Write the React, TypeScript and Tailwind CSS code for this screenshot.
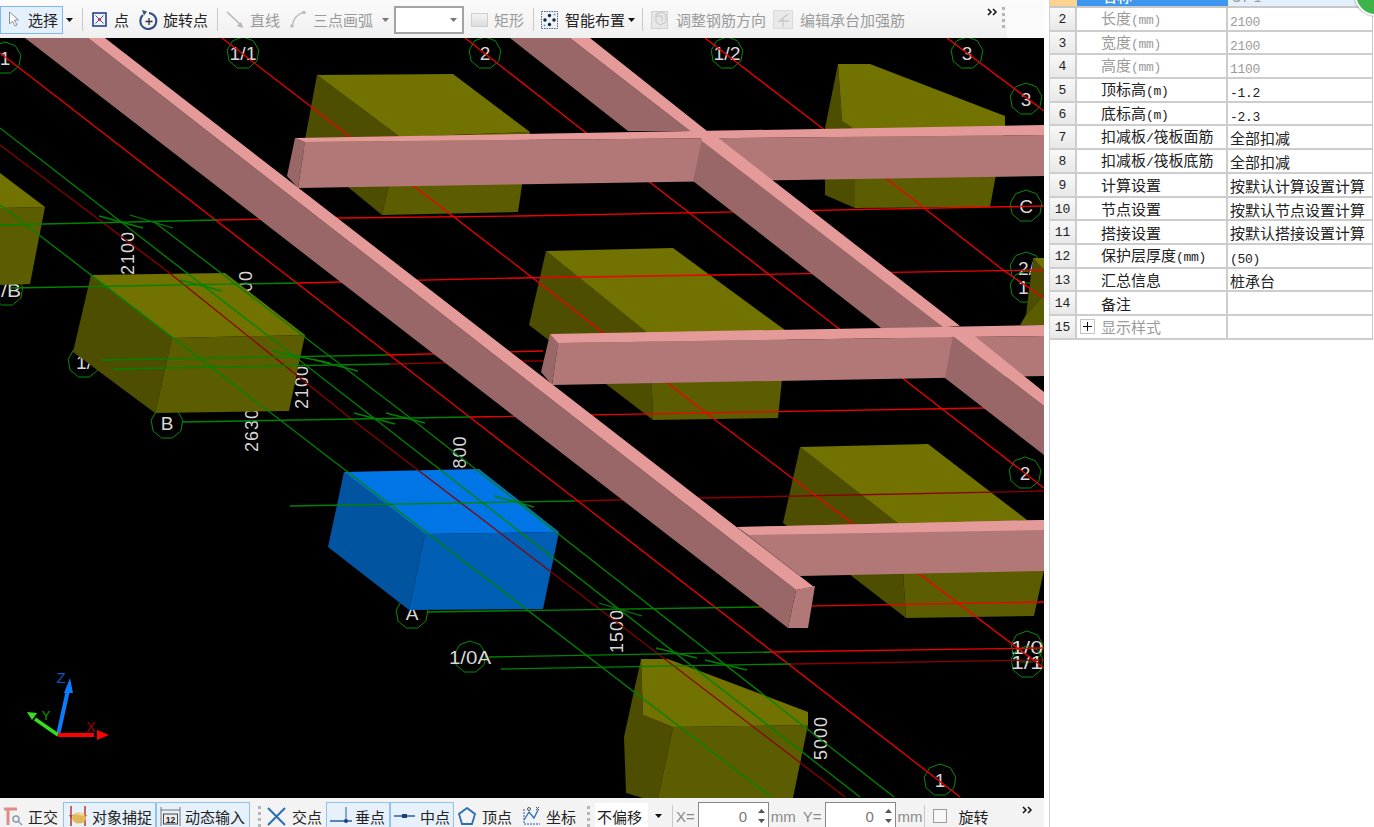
import type { ReactNode } from 'react';

const CJK = '"Noto Sans CJK SC", "Noto Sans", sans-serif';

// half-width latin next to 15px CJK, the way the old Windows grid renders it
function Mixed({ text }: { text: string }) {
  const parts = text.split(/([\x20-\x7e]+)/).filter(Boolean);
  return (
    <>
      {parts.map((p, i) =>
        /^[\x20-\x7e]+$/.test(p) ? (
          <span key={i} className="font-['Liberation_Mono',monospace] text-[13px] tracking-[-0.3px]">
            {p}
          </span>
        ) : (
          <span key={i}>{p}</span>
        )
      )}
    </>
  );
}

function Sep({ className = '' }: { className?: string }) {
  return <div className={`w-px h-[23px] bg-[#c9c9c9] shrink-0 ${className}`} />;
}

function Caret({ className = '', gray = false }: { className?: string; gray?: boolean }) {
  return (
    <svg width="7" height="4" viewBox="0 0 7 4" className={`shrink-0 ${className}`}>
      <path d="M0 0h7L3.5 4z" fill={gray ? '#777' : '#111'} />
    </svg>
  );
}

function Label({ children, className = '', off = false }: { children: ReactNode; className?: string; off?: boolean }) {
  return (
    <span className={`shrink-0 whitespace-nowrap text-[15px] leading-none ${off ? 'text-[#9b9b9b]' : 'text-[#222]'} ${className}`}>
      {children}
    </span>
  );
}

function Grip({ className = '' }: { className?: string }) {
  return (
    <div className={`flex flex-col gap-[3px] shrink-0 ${className}`}>
      {[0, 1, 2, 3].map((i) => (
        <div key={i} className="w-[3px] h-[3px] bg-[#b5b5b5]" />
      ))}
    </div>
  );
}

function Chevrons({ className = '' }: { className?: string }) {
  return (
    <svg width="11" height="8" viewBox="0 0 11 8" className={`shrink-0 ${className}`}>
      <path d="M1 1l3 3-3 3M6 1l3 3-3 3" fill="none" stroke="#111" strokeWidth="1.5" />
    </svg>
  );
}

function TopToolbar() {
  return (
    <div className="h-[38px] shrink-0 flex items-center bg-gradient-to-b from-[#fbfbfb] to-[#f0f0f0] overflow-hidden pt-[1px]">
      <div className="w-[63px] h-[28px] shrink-0 flex items-center bg-[#e4f0fb] border border-[#7db8f2]">
        <svg width="12" height="17" viewBox="0 0 12 17" className="ml-[7px]">
          <path d="M1.5 1v12l3-3 2.5 5 2-1-2.5-5h4z" fill="#fff" stroke="#8a8f98" />
        </svg>
        <Label className="ml-[8px]">选择</Label>
      </div>
      <Caret className="ml-[3px]" />
      <Sep className="ml-[9px]" />
      <svg width="15" height="15" viewBox="0 0 15 15" className="ml-[9px] shrink-0">
        <rect x="1" y="1" width="13" height="13" fill="#eef2fb" stroke="#26408f" strokeWidth="1.6" />
        <path d="M3.5 3.5l8 8M11.5 3.5l-8 8" stroke="#3a55a8" />
        <circle cx="7.5" cy="7.5" r="1.6" fill="#d8343a" />
      </svg>
      <Label className="ml-[7px]">点</Label>
      <svg width="20" height="22" viewBox="0 0 20 22" className="ml-[10px] shrink-0">
        <path d="M4 6a8 8 0 1 0 6-2" fill="none" stroke="#2d4f86" strokeWidth="2" />
        <path d="M3 1l5 1.500-3 4z" fill="#2d4f86" />
        <path d="M10 9v7M6.500 12.500h7" stroke="#333" strokeWidth="1.300" />
      </svg>
      <Label className="ml-[4px]">旋转点</Label>
      <Sep className="ml-[9px]" />
      <svg width="19" height="19" viewBox="0 0 19 19" className="ml-[8px] shrink-0">
        <path d="M1 2l15 14" stroke="#b5b5b5" strokeWidth="1.500" />
        <path d="M11 16l6 2-2-6z" fill="#b5b5b5" />
      </svg>
      <Label off className="ml-[5px]">直线</Label>
      <svg width="16" height="19" viewBox="0 0 16 19" className="ml-[10px] shrink-0">
        <path d="M2 17C3 9 7 4 14 2" fill="none" stroke="#bdbdbd" strokeWidth="1.500" />
        <circle cx="2" cy="16" r="1.800" fill="#bdbdbd" />
        <circle cx="14" cy="2.500" r="1.800" fill="#bdbdbd" />
      </svg>
      <Label off className="ml-[7px]">三点画弧</Label>
      <Caret gray className="ml-[9px]" />
      <div className="ml-[5px] w-[70px] h-[28px] shrink-0 flex items-center justify-end pr-[5px] bg-white border-2 border-[#a3a3a3]">
        <Caret gray />
      </div>
      <div className="ml-[7px] w-[17px] h-[14px] shrink-0 bg-gradient-to-b from-[#f4f4f4] to-[#dcdcdc] border border-[#cfcfcf]" />
      <Label off className="ml-[6px]">矩形</Label>
      <Sep className="ml-[9px]" />
      <svg width="17" height="18" viewBox="0 0 17 18" className="ml-[7px] shrink-0">
        <rect x="0.500" y="0.500" width="16" height="17" fill="#eef3f7" stroke="#51606e" strokeDasharray="1.500 1" />
        <circle cx="8.500" cy="4.500" r="1.700" fill="#14253f" />
        <circle cx="4" cy="9" r="1.700" fill="#14253f" />
        <circle cx="13" cy="9" r="1.700" fill="#14253f" />
        <circle cx="8.500" cy="13.500" r="1.700" fill="#14253f" />
        <circle cx="3.500" cy="14.500" r="1" fill="#6b93c9" />
        <circle cx="13.500" cy="3.500" r="1" fill="#6b93c9" />
      </svg>
      <Label className="ml-[7px]">智能布置</Label>
      <Caret className="ml-[3px]" />
      <Sep className="ml-[7px]" />
      <svg width="17" height="19" viewBox="0 0 17 19" className="ml-[8px] shrink-0">
        <rect x="0.500" y="1.500" width="16" height="17" fill="#e7e7e7" stroke="#d2d2d2" />
        <path d="M5 4l6-2 4 3v7l-6 3-4-3z" fill="none" stroke="#c2c2c2" />
        <path d="M5 6h6v5" fill="none" stroke="#c2c2c2" />
      </svg>
      <Label off className="ml-[8px]">调整钢筋方向</Label>
      <svg width="20" height="19" viewBox="0 0 20 19" className="ml-[7px] shrink-0">
        <rect x="0.500" y="0.500" width="19" height="18" fill="#e9e9e9" stroke="#dadada" />
        <path d="M15 4L6 11h10M10 7v10" fill="none" stroke="#c8c8c8" strokeWidth="1.300" />
      </svg>
      <Label off className="ml-[7px]">编辑承台加强筋</Label>
      <Chevrons className="ml-[82px] -mt-[15px]" />
      <Grip className="ml-[4px] -mt-[4px]" />
      <div className="ml-[2px] flex-1 h-full bg-[#fafafa] mt-[6px]" />
    </div>
  );
}

const BUBBLES: { x: number; y: number; t: string; rx?: number; ry?: number; tw?: number; tx?: number }[] = [
  { x: 5, y: 58, t: '1' },
  { x: 243, y: 53, t: '1/1', tw: 27 },
  { x: 485, y: 53, t: '2' },
  { x: 727, y: 53, t: '1/2', tw: 27 },
  { x: 967, y: 53, t: '3' },
  { x: 1026, y: 99, t: '3' },
  { x: 1026, y: 206, t: 'C' },
  { x: 1026, y: 268, t: '2/', tw: 16 },
  { x: 1026, y: 287, t: '1/', tw: 16 },
  { x: 7, y: 290, t: '/B', tw: 20, tx: 11 },
  { x: 84, y: 362, t: '1/', tw: 16 },
  { x: 167, y: 423, t: 'B' },
  { x: 412, y: 613, t: 'A', rx: 16, ry: 16 },
  { x: 470, y: 657, t: '1/0A', tw: 42 },
  { x: 940, y: 780, t: '1' },
  { x: 1025, y: 473, t: '2' },
  { x: 1027, y: 647, t: '1/0', tw: 32 },
  { x: 1027, y: 662, t: '1/1', tw: 32 },
];

const DIMS = [
  { x: 128, y: 253, t: '2100' },
  { x: 246, y: 281, t: '00' },
  { x: 252, y: 430, t: '2630' },
  { x: 302, y: 387, t: '2100' },
  { x: 460, y: 452, t: '800' },
  { x: 617, y: 631, t: '1500' },
  { x: 821, y: 738, t: '5000' },
];

// top, left, right faces
const BOXES: [string, string, string][] = [
  ['317,75 453,74 530,132 400,137', '317,75 400,137 382,215 303,150', '400,137 530,132 518,212 382,215'],
  ['546,251 673,248 785,330 650,335', '546,251 650,335 653,420 529,325', '650,335 787,330 778,418 653,420'],
  ['838,64 870,64 1005,116 1005,128 855,130 842,121', '838,64 842,121 855,130 855,208 825,195 825,128', '855,130 1005,126 990,207 855,208'],
  ['91,275 225,273 305,335 172,338', '91,275 172,338 155,413 73,352', '172,338 305,335 289,411 155,413'],
  ['0,173 45,207 0,208', '0,0 0,0 0,0', '0,208 45,207 30,284 0,285'],
  ['800,447 928,444 1044,533 900,525', '800,447 900,525 906,618 783,523', '900,525 1044,520 1044,570 1034,616 906,618'],
  ['641,659 668,659 808,712 808,725 673,727 643,715', '641,659 643,715 673,727 658,798 643,798 626,793 624,737', '673,727 808,725 793,798 658,798'],
  ['1033,258 1044,258 1044,270', '1033,258 1044,270 1044,295 1026,315', '1026,315 1044,295 1044,325 1020,325'],
];

const RED = [
  '0,53 467,415 960,797',
  '222,38 520,268 710,416 1044,668',
  '465,38 585,132 838,328 1044,488',
  '705,38 822,128 1003,270 1044,298',
  '947,38 1044,111',
  '340,218 520,216 1044,206',
  '217,220 340,218',
  '297,283 520,278 1044,270',
  '387,355 543,351',
  '470,417 983,408 1044,407',
  '759,607 1044,602',
  '771,652 1044,648',
];
const DARK_RED = ['0,145 167,271 350,418 845,797', '390,364 527,361 545,361', '575,501 702,498 1044,491', '791,664 1044,660'];
const GREEN = [
  '0,128 370,415 860,797',
  '153,221 413,420 894,797',
  '0,205 771,797',
  '0,225 217,220',
  '10,288 297,283',
  '102,360 387,355',
  '113,369 390,364',
  '183,422 470,417',
  '290,506 575,501',
  '427,612 759,607',
  '489,657 771,652',
  '501,669 791,664',
  '99,216 143,228',
  '130,215 173,228',
  '180,280 222,291',
  '272,351 330,363',
  '315,360 358,371',
  '354,413 395,424',
  '386,413 425,423',
  '494,496 534,507',
  '599,603 642,616',
  '656,648 697,658',
  '705,660 747,670',
];

function ring(x: number, y: number, rx: number, ry: number) {
  const pts: string[] = [];
  for (let i = 0; i < 9; i++) {
    const a = (i / 9) * Math.PI * 2 - Math.PI / 2;
    pts.push(`${(x + rx * Math.cos(a)).toFixed(1)},${(y + ry * Math.sin(a)).toFixed(1)}`);
  }
  return pts.join(' ');
}

function Scene() {
  const pink = '#e59a9a';
  const side = '#996767';
  const front = '#b27777';
  return (
    <svg viewBox="0 38 1044 760" width="1044" height="760" className="block bg-black shrink-0">
      <g fontFamily="Liberation Sans, sans-serif" fill="#d8d8d8">
        {DIMS.map((d) => (
          <text key={d.t + d.x} x={d.x} y={d.y} fontSize="18" textAnchor="middle" dominantBaseline="central" letterSpacing="1" transform={`rotate(-90 ${d.x} ${d.y})`}>
            {d.t}
          </text>
        ))}
        {BUBBLES.map((b) => (
          <g key={b.t + b.x + b.y}>
            <polygon points={ring(b.x, b.y, b.rx ?? 16, b.ry ?? 16)} fill="none" stroke="#0b8a0b" />
            <text
              x={b.tx ?? b.x}
              y={b.y + 7}
              fontSize="19"
              textAnchor="middle"
              {...(b.tw ? { textLength: b.tw, lengthAdjust: 'spacingAndGlyphs' as const } : {})}
            >
              {b.t}
            </text>
          </g>
        ))}
      </g>

      {BOXES.map((b, i) => (
        <g key={i}>
          <polygon points={b[1]} fill="#4e4e00" />
          <polygon points={b[2]} fill="#5c5c00" />
          <polygon points={b[0]} fill="#727200" />
        </g>
      ))}
      <polygon points="344,472 425,534 409,610 328,547" fill="#0054a0" />
      <polygon points="425,534 559,532 543,609 409,610" fill="#005eb4" />
      <polygon points="344,472 479,469 559,532 425,534" fill="#0076e6" />

      <g fill="none" strokeWidth="1.300">
        {DARK_RED.map((p) => (
          <polyline key={p} points={p} stroke="#8c0000" />
        ))}
        {RED.map((p) => (
          <polyline key={p} points={p} stroke="#f00000" />
        ))}
        {GREEN.map((p) => (
          <polyline key={p} points={p} stroke="#008400" />
        ))}
      </g>

      {/* second diagonal beam, part behind the first cross beam */}
      <polygon points="510,38 570,38 690,131 628,131" fill={side} />
      <polygon points="570,38 590,38 707,131 690,131" fill={pink} />

      {/* cross beam A */}
      <polygon points="295,138 305,142 298,188 287,176" fill={side} />
      <polygon points="305,142 1044,135 1044,176 298,188" fill={front} />
      <polygon points="295,138 1044,125 1044,135 305,142" fill={pink} />

      {/* second diagonal beam, middle part */}
      <polygon points="702,140 952,328 945,378 693,181" fill={side} />
      <polygon points="700,133 712,133 960,326 943,327 702,141" fill={pink} />

      {/* cross beam B */}
      <polygon points="550,334 558,343 552,385 541,372" fill={side} />
      <polygon points="558,343 1044,336 1044,376 552,385" fill={front} />
      <polygon points="550,334 1044,325 1044,336 558,343" fill={pink} />

      {/* second diagonal beam, last part */}
      <polygon points="953,336 1044,406 1044,455 945,378" fill={side} />
      <polygon points="955,328 972,334 1044,392 1044,406 953,336" fill={pink} />

      {/* cross beam C */}
      <polygon points="737,527 1044,520 1044,571 800,576" fill={front} />
      <polygon points="737,527 1044,520 1044,530 749,535" fill={pink} />

      {/* main diagonal beam */}
      <polygon points="25,38 88,38 796,590 788,628" fill={side} />
      <polygon points="88,38 105,38 814,587 796,590" fill={pink} />
      <polygon points="796,590 815,586 808,628 788,628" fill={front} />

      {/* axis gizmo */}
      <path d="M58 735L68 690" stroke="#0a7cff" strokeWidth="4" />
      <path d="M70 678l3 15h-9z" fill="#0a7cff" />
      <path d="M58 735L35 719" stroke="#35e01a" strokeWidth="3.500" />
      <path d="M27 712l10 1-5 7z" fill="#35e01a" />
      <path d="M58 735h36" stroke="#ff0000" strokeWidth="4" />
      <path d="M109 735l-12-5v10z" fill="#ff0000" />
      <text x="61" y="683" fontSize="15" textAnchor="middle" fill="#0a5cc0" fontFamily="Liberation Sans, sans-serif">Z</text>
      <text x="46" y="720" fontSize="13" textAnchor="middle" fill="#0a9a0a" fontFamily="Liberation Sans, sans-serif">Y</text>
      <text x="91" y="732" fontSize="14" textAnchor="middle" fill="#a00000" fontFamily="Liberation Sans, sans-serif">X</text>
    </svg>
  );
}

function Toggle({ children, className = '' }: { children: ReactNode; className?: string }) {
  return (
    <div className={`h-[28px] shrink-0 flex items-center bg-[#e6f1fb] border border-[#8fc3f5] ${className}`}>{children}</div>
  );
}

function Spin() {
  return (
    <div className="flex flex-col gap-[6px] items-center ml-auto mr-[3px]">
      <svg width="7" height="4" viewBox="0 0 7 4">
        <path d="M0 4h7L3.500 0z" fill="#555" />
      </svg>
      <svg width="7" height="4" viewBox="0 0 7 4">
        <path d="M0 0h7L3.500 4z" fill="#555" />
      </svg>
    </div>
  );
}

function BottomToolbar() {
  return (
    <div className="h-[29px] shrink-0 flex items-center bg-[#f3f3f3] pt-[7px] overflow-hidden">
      <svg width="21" height="20" viewBox="0 0 21 20" className="ml-[3px] shrink-0">
        <path d="M1 3h13M5 3v16" stroke="#e08a8a" strokeWidth="3" fill="none" />
        <circle cx="13" cy="13" r="3" fill="none" stroke="#8a9ab0" strokeWidth="1.500" />
        <path d="M15 15l4 4" stroke="#8a9ab0" strokeWidth="1.500" />
      </svg>
      <Label className="ml-[4px]">正交</Label>
      <Toggle className="ml-[5px] w-[93px]">
        <svg width="22" height="22" viewBox="0 0 22 22" className="ml-[3px] shrink-0">
          <path d="M4 1v20M18 1v20" stroke="#b23a2e" strokeWidth="1.500" />
          <path d="M2 10l2 3 2-3M16 10l2 3 2-3" fill="#b23a2e" />
          <ellipse cx="12" cy="13" rx="7" ry="5.500" fill="#e2b95a" />
          <path d="M7 9l8-1 2 3" fill="#f2dc95" />
        </svg>
        <Label className="ml-[3px]">对象捕捉</Label>
      </Toggle>
      <Toggle className="w-[94px]">
        <svg width="21" height="21" viewBox="0 0 21 21" className="ml-[3px] shrink-0">
          <path d="M1 1v19M20 1v19M1 4h19" stroke="#777" fill="none" />
          <rect x="3.500" y="8" width="14" height="10" fill="#eee" stroke="#444" />
          <text x="10.500" y="16.500" fontSize="8.500" textAnchor="middle" fontWeight="bold" fill="#222" fontFamily="Liberation Sans, sans-serif">
            12
          </text>
        </svg>
        <Label className="ml-[4px]">动态输入</Label>
      </Toggle>
      <Grip className="ml-[8px]" />
      <svg width="19" height="19" viewBox="0 0 19 19" className="ml-[6px] shrink-0">
        <path d="M1 1l17 17M18 1L1 18" stroke="#2a6db5" strokeWidth="2" />
      </svg>
      <Label className="ml-[6px]">交点</Label>
      <Toggle className="ml-[4px] w-[64px]">
        <svg width="22" height="20" viewBox="0 0 22 20" className="ml-[3px] shrink-0">
          <path d="M0 15h22" stroke="#2a5ea5" strokeWidth="1.500" />
          <path d="M16 1v14" stroke="#2a5ea5" />
          <circle cx="16" cy="15" r="2" fill="#1c3f78" />
        </svg>
        <Label className="ml-[3px]">垂点</Label>
      </Toggle>
      <Toggle className="w-[64px]">
        <svg width="21" height="10" viewBox="0 0 21 10" className="ml-[3px] shrink-0">
          <path d="M0 5h21" stroke="#2a5ea5" strokeWidth="1.500" />
          <rect x="8" y="3" width="5" height="4" fill="#1c3f78" />
        </svg>
        <Label className="ml-[5px]">中点</Label>
      </Toggle>
      <svg width="18" height="19" viewBox="0 0 18 19" className="ml-[4px] shrink-0">
        <path d="M9 1l8 6-3 10H4L1 7z" fill="none" stroke="#2a6db5" strokeWidth="1.800" />
      </svg>
      <Label className="ml-[6px]">顶点</Label>
      <svg width="21" height="21" viewBox="0 0 21 21" className="ml-[8px] shrink-0">
        <path d="M4 3v15h16" fill="none" stroke="#2a5ea5" strokeDasharray="2 1" />
        <path d="M4 14l5-8 5 6 4-8" fill="none" stroke="#2a6db5" strokeWidth="1.300" />
        <circle cx="9" cy="3" r="1.500" fill="none" stroke="#555" />
        <path d="M16 1l3 3M19 1l-3 3" stroke="#555" />
      </svg>
      <Label className="ml-[5px]">坐标</Label>
      <Grip className="ml-[11px]" />
      <div className="ml-[5px] w-[53px] h-[26px] shrink-0 bg-white flex items-center pl-[2px]">
        <Label>不偏移</Label>
      </div>
      <Caret className="ml-[7px]" />
      <Sep className="ml-[10px]" />
      <span className="ml-[3px] shrink-0 text-[15px] leading-none text-[#8a8a8a] font-['Liberation_Sans',sans-serif]">X=</span>
      <div className="ml-[3px] w-[71px] h-[28px] shrink-0 bg-white border border-[#888] flex items-center">
        <span className="ml-[40px] text-[15px] leading-none text-[#777] font-['Liberation_Sans',sans-serif]">0</span>
        <Spin />
      </div>
      <span className="ml-[2px] shrink-0 text-[15px] leading-none text-[#8a8a8a] font-['Liberation_Sans',sans-serif]">mm</span>
      <span className="ml-[7px] shrink-0 text-[15px] leading-none text-[#8a8a8a] font-['Liberation_Sans',sans-serif]">Y=</span>
      <div className="ml-[3px] w-[71px] h-[28px] shrink-0 bg-white border border-[#888] flex items-center">
        <span className="ml-[40px] text-[15px] leading-none text-[#777] font-['Liberation_Sans',sans-serif]">0</span>
        <Spin />
      </div>
      <span className="ml-[2px] shrink-0 text-[15px] leading-none text-[#8a8a8a] font-['Liberation_Sans',sans-serif]">mm</span>
      <Sep className="ml-[1px]" />
      <div className="ml-[8px] w-[14px] h-[14px] shrink-0 bg-[#f7f7f7] border border-[#9a9a9a]" />
      <Label className="ml-[12px]">旋转</Label>
      <Chevrons className="ml-[33px] -mt-[12px]" />
    </div>
  );
}

const ROWS: { n: number; name: string; value: string; off?: boolean; plus?: boolean }[] = [
  { n: 2, name: '长度(mm)', value: '2100', off: true },
  { n: 3, name: '宽度(mm)', value: '2100', off: true },
  { n: 4, name: '高度(mm)', value: '1100', off: true },
  { n: 5, name: '顶标高(m)', value: '-1.2' },
  { n: 6, name: '底标高(m)', value: '-2.3' },
  { n: 7, name: '扣减板/筏板面筋', value: '全部扣减' },
  { n: 8, name: '扣减板/筏板底筋', value: '全部扣减' },
  { n: 9, name: '计算设置', value: '按默认计算设置计算' },
  { n: 10, name: '节点设置', value: '按默认节点设置计算' },
  { n: 11, name: '搭接设置', value: '按默认搭接设置计算' },
  { n: 12, name: '保护层厚度(mm)', value: '(50)' },
  { n: 13, name: '汇总信息', value: '桩承台' },
  { n: 14, name: '备注', value: '' },
  { n: 15, name: '显示样式', value: '', off: true, plus: true },
];

function PropertyPanel() {
  return (
    <div className="relative flex-1 h-full bg-white overflow-hidden border-l border-[#cfcfcf]">
      <div className="w-[323px] mt-[-16px] border-r border-[#c8c8c8]">
        <div className="h-[24px] flex border-b-2 border-[#c8c8c8] text-[15px] leading-[24px]">
          <div className="w-[27px] bg-[#fbd28e]" />
          <div className="w-[151px] bg-[#3d96f0] text-white pl-[25px] font-medium">名称</div>
          <div className="flex-1 bg-[#e3f0fc] text-[#9b9b9b] pl-[3px]">CT-1</div>
        </div>
        {ROWS.map((r) => (
          <div key={r.n} className="h-[23.7px] flex border-b-2 border-[#cdcdcd] text-[15px] leading-[23px]">
            <div className="w-[27px] shrink-0 bg-gradient-to-b from-[#f8f8f8] to-[#e8e8e8] border-r-2 border-[#cdcdcd] text-center text-[#222] font-['Liberation_Mono',monospace] text-[13px]">
              {r.n}
            </div>
            <div className={`w-[151px] shrink-0 flex items-center border-r-2 border-[#cdcdcd] ${r.plus ? 'pl-[3px]' : 'pl-[24px]'} ${r.off ? 'text-[#9b9b9b]' : 'text-[#222]'}`}>
              {r.plus && (
                <div className="w-[15px] h-[15px] mr-[6px] border border-[#c4c4c4] flex items-center justify-center">
                  <svg width="9" height="9" viewBox="0 0 9 9">
                    <path d="M4.500 0v9M0 4.500h9" stroke="#111" />
                  </svg>
                </div>
              )}
              <span className="whitespace-nowrap">
                <Mixed text={r.name} />
              </span>
            </div>
            <div className={`flex-1 pl-[2px] whitespace-nowrap ${r.off ? 'text-[#9b9b9b]' : 'text-[#222]'}`}>
              <Mixed text={r.value} />
            </div>
          </div>
        ))}
      </div>
      <div className="absolute left-[304px] top-[-28px] w-[44px] h-[44px] rounded-full bg-[#3cb44a] border-2 border-white shadow-[0_0_2px_#666]" />
    </div>
  );
}

export default function App() {
  return (
    <div className="w-[1374px] h-[827px] flex overflow-hidden bg-white" style={{ fontFamily: CJK }}>
      <div className="w-[1044px] h-full flex flex-col shrink-0">
        <TopToolbar />
        <Scene />
        <BottomToolbar />
      </div>
      <div className="w-[5px] h-full bg-white shrink-0" />
      <PropertyPanel />
    </div>
  );
}
